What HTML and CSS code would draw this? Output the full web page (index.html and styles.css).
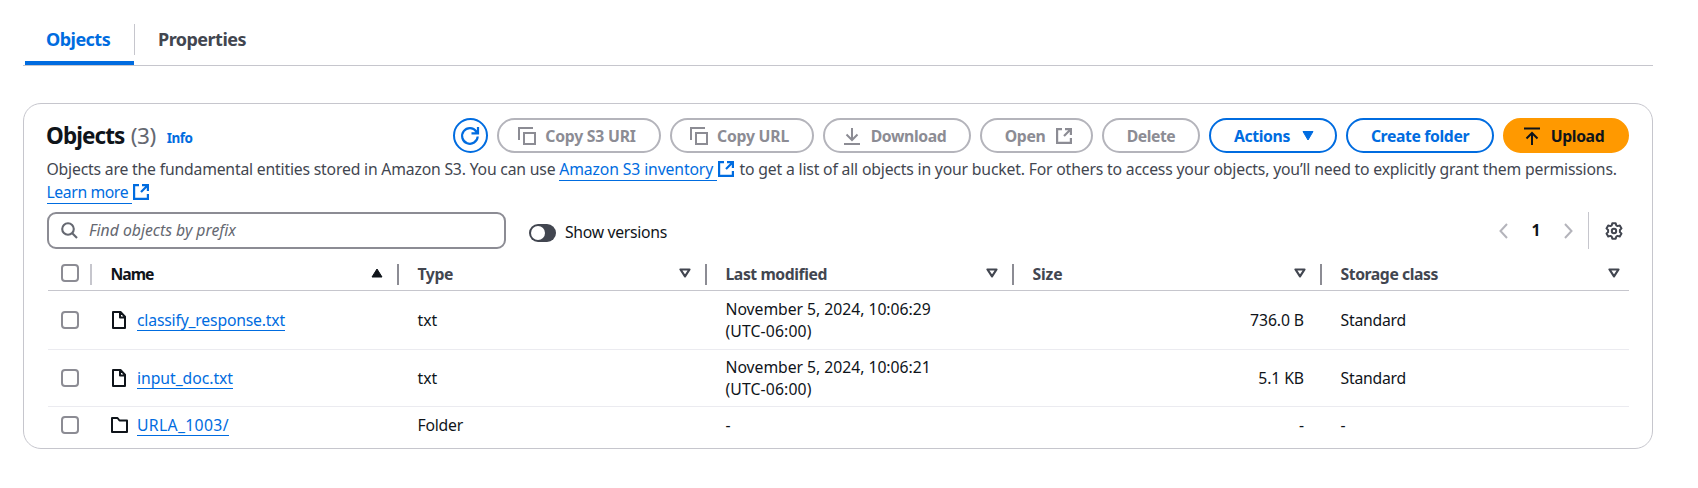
FILE: index.html
```
<!DOCTYPE html>
<html lang="en">
<head>
<meta charset="utf-8">
<title>Objects</title>
<link rel="stylesheet" href="styles.css">
</head>
<body>
<svg class="defs" width="0" height="0">
  <symbol id="copy" viewBox="0 0 18 18"><path d="M1 13V1h14M6 6h11v11H6z" fill="none" stroke="currentColor" stroke-width="2"/></symbol>
  <symbol id="external" viewBox="0 0 16 16"><path d="M6 1.100H1.100v13.800h13.800V10M9 1.100h5.900V7M14.500 1.500L8 8" fill="none" stroke="currentColor" stroke-width="2.200"/></symbol>
  <symbol id="file" viewBox="0 0 14 18"><path d="M1 1h7.500L13 5.800V17H1zM8 1v5.500h5" fill="none" stroke="currentColor" stroke-width="2" stroke-linejoin="round"/></symbol>
  <symbol id="folder" viewBox="0 0 17 16"><path d="M1 15V1h5.500l2 2.500H16V15z" fill="none" stroke="currentColor" stroke-width="2" stroke-linejoin="round"/></symbol>
  <symbol id="sort" viewBox="0 0 12 10"><path d="M1.500 1.500h9L6 8.300z" fill="none" stroke="currentColor" stroke-width="2.200" stroke-linejoin="round"/></symbol>
</svg>

<nav class="tabs">
  <a class="tab tab-active"><span>Objects</span></a>
  <a class="tab"><span>Properties</span></a>
</nav>

<main class="container">
  <header class="header">
    <h2 class="title">Objects <span class="count">(3)</span></h2>
    <a class="info">Info</a>
    <div class="actions">
      <button class="btn btn-refresh" aria-label="Refresh"><svg width="20" height="20" viewBox="0 0 20 20" fill="none" stroke="currentColor" stroke-width="2.200"><path d="M17.700 10.500A7.800 7.800 0 1 1 16.300 5.500L17.500 7M18 1v6.300h-6.500"/></svg></button>
      <button class="btn btn-off copy-uri"><svg width="18" height="18"><use href="#copy"/></svg><span>Copy S3 URI</span></button>
      <button class="btn btn-off copy-url"><svg width="18" height="18"><use href="#copy"/></svg><span>Copy URL</span></button>
      <button class="btn btn-off download"><svg width="16" height="18" viewBox="0 0 16 18" fill="none" stroke="currentColor" stroke-width="2"><path d="M0 17h16M8 1v12M2.500 7.500L8 13l5.500-5.500"/></svg><span>Download</span></button>
      <button class="btn btn-off open"><span>Open</span><svg width="16" height="16"><use href="#external"/></svg></button>
      <button class="btn btn-off delete"><span>Delete</span></button>
      <button class="btn menu"><span>Actions</span><svg width="12" height="10" viewBox="0 0 12 10"><path d="M1 .5h10L6 9z" fill="currentColor" stroke="currentColor" stroke-linejoin="round"/></svg></button>
      <button class="btn create"><span>Create folder</span></button>
      <button class="btn btn-primary"><svg width="16" height="18" viewBox="0 0 16 18" fill="none" stroke="currentColor" stroke-width="2"><path d="M0 1.500h16M8 18V6M2.500 11.500L8 6l5.500 5.500"/></svg><span>Upload</span></button>
    </div>
  </header>

  <p class="description"><span class="intro">Objects are the fundamental entities stored in Amazon S3. You can use </span><a class="link inventory">Amazon S3 inventory </a><svg class="ext" width="16" height="16"><use href="#external"/></svg><span class="rest"> to get a list of all objects in your bucket. For others to access your objects, you’ll need to explicitly grant them permissions.</span><br><a class="link learn">Learn more </a><svg class="ext" width="16" height="16"><use href="#external"/></svg></p>

  <div class="tools">
    <div class="search"><svg width="17" height="17" viewBox="0 0 17 17" fill="none" stroke="currentColor" stroke-width="2.100"><circle cx="7" cy="7" r="5.800"/><path d="M11 11l5 5"/></svg><span>Find objects by prefix</span></div>
    <div class="toggle"><i class="switch"></i><span>Show versions</span></div>
    <div class="pager">
      <svg width="9" height="16" viewBox="0 0 9 16" fill="none" stroke="currentColor" stroke-width="2"><path d="M8 1L1.500 8 8 15"/></svg>
      <b class="page">1</b>
      <svg width="9" height="16" viewBox="0 0 9 16" fill="none" stroke="currentColor" stroke-width="2"><path d="M1 1l6.500 7L1 15"/></svg>
    </div>
    <div class="settings"><svg width="18" height="18" viewBox="0 0 18 18" fill="none" stroke="currentColor" stroke-width="2" stroke-linejoin="round"><path d="M7.300 1.200h3.400l.6 2.200 1.200.7 2.300-.6 1.700 2.900L14.900 8v2l1.600 1.600-1.700 2.900-2.300-.6-1.200.7-.6 2.200H7.300l-.6-2.200-1.200-.7-2.300.6-1.700-2.900L3.100 10V8L1.500 6.400l1.700-2.900 2.300.6 1.200-.7z"/><circle cx="9" cy="9" r="2.200"/></svg></div>
  </div>

  <section class="table">
    <div class="row head">
      <div class="cell check"><i class="box"></i></div>
      <div class="cell sorted"><span class="h-name">Name</span><svg width="12" height="10" viewBox="0 0 12 10"><path d="M1 9h10L6 1z" fill="currentColor" stroke="currentColor" stroke-linejoin="round"/></svg></div>
      <div class="cell"><span>Type</span><svg width="12" height="10"><use href="#sort"/></svg></div>
      <div class="cell"><span>Last modified</span><svg width="12" height="10"><use href="#sort"/></svg></div>
      <div class="cell"><span class="h-size">Size</span><svg width="12" height="10"><use href="#sort"/></svg></div>
      <div class="cell"><span>Storage class</span><svg width="12" height="10"><use href="#sort"/></svg></div>
    </div>
    <div class="row">
      <div class="cell check"><i class="box"></i></div>
      <div class="cell name"><svg width="14" height="18"><use href="#file"/></svg><a class="link n1">classify_response.txt</a></div>
      <div class="cell">txt</div>
      <div class="cell date"><span>November 5, 2024, 10:06:29<br><span class="utc">(UTC-06:00)</span></span></div>
      <div class="cell size">736.0 B</div>
      <div class="cell storage">Standard</div>
    </div>
    <div class="row">
      <div class="cell check"><i class="box"></i></div>
      <div class="cell name"><svg width="14" height="18"><use href="#file"/></svg><a class="link">input_doc.txt</a></div>
      <div class="cell">txt</div>
      <div class="cell date"><span>November 5, 2024, 10:06:21<br><span class="utc">(UTC-06:00)</span></span></div>
      <div class="cell size">5.1 KB</div>
      <div class="cell storage">Standard</div>
    </div>
    <div class="row last">
      <div class="cell check"><i class="box"></i></div>
      <div class="cell name folder"><svg width="17" height="16"><use href="#folder"/></svg><a class="link n3">URLA_1003/</a></div>
      <div class="cell storage">Folder</div>
      <div class="cell">-</div>
      <div class="cell size">-</div>
      <div class="cell">-</div>
    </div>
  </section>
</main>
</body>
</html>
```

FILE: styles.css
```
* { box-sizing: border-box; }
body {
  margin: 0;
  padding: 17px 45px 0 23px;
  background: #fff;
  color: #0f141a;
  font: 15.75px/22.5px "Noto Sans", "Open Sans", sans-serif;
}
svg { flex: none; display: block; }
.defs { position: absolute; }

.tabs { display: flex; height: 49px; border-bottom: 1px solid #c6c6cd; padding-left: 2px; }
.tab {
  display: flex;
  align-items: flex-start;
  padding: 11px 24px 0 25px;
  font-size: 18px;
  font-weight: 700;
  letter-spacing: -.53px;
  color: #424650;
}
.tab-active {
  width: 109px;
  padding-left: 21px;
  color: #006ce0;
  background: linear-gradient(#006ce0, #006ce0) bottom / 100% 4px no-repeat;
  border-radius: 4px 4px 0 0;
}
.tab + .tab { height: 31px; margin-top: 7px; padding-top: 4px; padding-left: 23px; border-left: 1px solid #c6c6cd; }

.container { margin-top: 37px; height: 346px; border: 1px solid #c6c6cd; border-radius: 18px; padding: 14px 23px 0; }
.header { display: flex; align-items: center; height: 35px; }
.title { margin: 0 0 0 -1px; font-size: 22.5px; line-height: 28px; letter-spacing: -.92px; word-spacing: 1.500px; }
.count { font-weight: 400; color: #656871; letter-spacing: -.46px; }
.info { margin: 5px 0 0 11px; font-size: 13.5px; font-weight: 700; letter-spacing: -.5px; color: #006ce0; }
.actions { display: flex; gap: 9px; margin-left: auto; }
.btn {
  display: flex;
  align-items: center;
  justify-content: center;
  gap: 9px;
  height: 35px;
  padding: 0;
  border: 2px solid #006ce0;
  border-radius: 18px;
  background: #fff;
  color: #006ce0;
  font: 700 15.75px/22px "Noto Sans", "Open Sans", sans-serif;
  letter-spacing: -.37px;
}
.btn-off { border-color: #b4b4bb; color: #8c8c94; }
.btn-refresh { width: 35px; padding-right: 2px; }
.copy-uri { width: 164px; padding-right: 4px; letter-spacing: -.21px; }
.copy-url { width: 144px; padding-right: 5px; letter-spacing: -.22px; }
.download { width: 148px; padding-right: 4px; gap: 11px; }
.open { width: 113px; padding-left: 4px; gap: 11px; }
.delete { width: 98px; letter-spacing: -.46px; }
.menu { width: 128px; padding-left: 2px; gap: 12px; }
.create { width: 148px; }
.btn-primary { width: 126px; padding-right: 4px; gap: 11px; border-color: #ff9900; background: #ff9900; color: #0f141a; }

.description { margin: 5px 0 0 -.5px; color: #424650; white-space: pre; }
.link { color: #006ce0; border-bottom: 1px solid #006ce0; letter-spacing: -.05px; }
.intro { letter-spacing: -.19px; }
.inventory { letter-spacing: -.13px; }
.rest { letter-spacing: -.18px; margin-left: 1.500px; }
.learn { letter-spacing: -.4px; }
.ext { display: inline-block; vertical-align: -2px; margin-left: 1px; color: #006ce0; }

.tools { display: flex; align-items: center; height: 37px; margin-top: 9px; }
.search {
  display: flex;
  align-items: center;
  gap: 11px;
  width: 459px;
  height: 37px;
  padding-left: 12px;
  border: 2px solid #8c8c94;
  border-radius: 9px;
  color: #656871;
  font-style: italic;
}
.toggle { display: flex; align-items: center; gap: 9px; margin: 4px 0 0 23px; letter-spacing: -.3px; }
.switch { width: 27px; height: 18px; border-radius: 9px; background: #424650; padding: 2px; }
.switch::before { content: ""; display: block; width: 14px; height: 14px; border-radius: 50%; background: #fff; }
.pager { display: flex; align-items: center; gap: 23px; margin-left: auto; color: #b4b4bb; }
.page { color: #0f141a; width: 10px; text-align: center; }
.settings { display: flex; align-items: center; height: 37px; margin-left: 15px; padding: 0 6px 0 16px; border-left: 1px solid #c6c6cd; color: #424650; }

.table { margin-left: 1px; }
.row { display: grid; grid-template-columns: 44px 307px 308px 307px 308px 307px; height: 57px; border-bottom: 1px solid #ebebf0; }
.row.head { height: 42px; border-color: #c6c6cd; font-weight: 700; color: #424650; }
.row.head + .row { height: 59px; }
.row.last { height: 36px; border: 0; }
.cell { display: flex; align-items: center; padding: 0 25px 0 18.500px; }
.head .cell { justify-content: space-between; align-self: start; height: 21px; margin-top: 15px; padding-right: 14px; border-right: 2px solid #8c8c94; letter-spacing: -.43px; }
.head .cell:last-child { border: 0; padding-right: 9px; }
.head svg { margin-top: -4px; }
.head .sorted { color: #0f141a; }
.head .h-name { letter-spacing: -1px; }
.head .h-size { letter-spacing: -.14px; }
.cell.check { padding: 0 0 0 13px; }
.head .cell.check { border-color: #c6c6cd; }
.head .box { margin-top: -3px; }
.box { width: 18px; height: 18px; border: 2px solid #8c8c94; border-radius: 4px; }
.name { gap: 11px; padding-left: 20px; }
.name.folder { padding-left: 19px; gap: 9px; }
.name .link { line-height: 20px; }
.n1 { letter-spacing: -.19px; }
.n3 { letter-spacing: .33px; }
.utc { letter-spacing: .12px; }
.date { letter-spacing: -.04px; }
.cell.size { justify-content: flex-end; padding-right: 18px; letter-spacing: -.1px; }
.storage { letter-spacing: -.22px; }
```
